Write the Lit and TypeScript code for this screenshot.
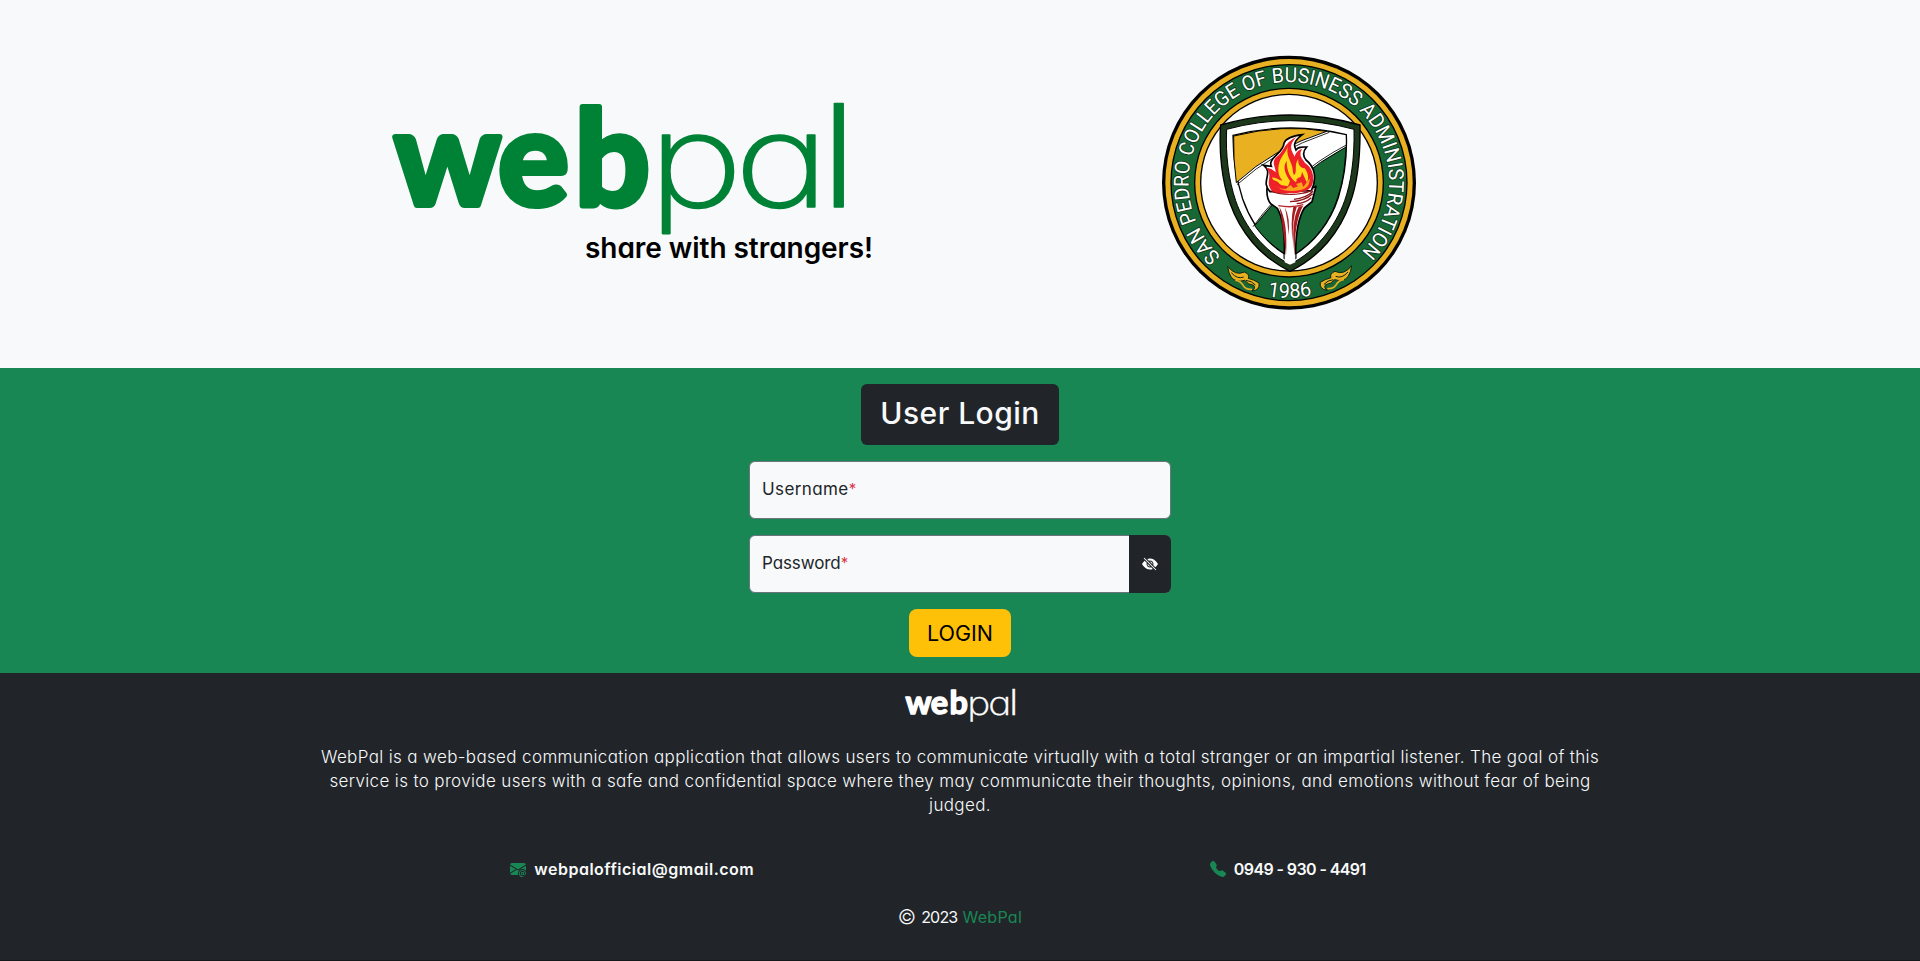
import { LitElement, html, svg, css } from "lit";
import { customElement, property } from "lit/decorators.js";

const FONT = css`"Inter", "Lato", sans-serif`;

@customElement("wp-wordmark")
export class WpWordmark extends LitElement {
  static styles = css`
    :host { display: block; }
    svg { display: block; width: 100%; height: 100%; overflow: visible; }
    .web { font: 700 133px "Lato", sans-serif; stroke-width: 6px; stroke-linejoin: round; }
    .pa { font: 200 131px "Inter", sans-serif; font-feature-settings: "cv11"; }
    .l { font: 300 143px "Lato", sans-serif; }
  `;
  @property() color = "#008236";
  render() {
    return html`<svg viewBox="12 12 452 134" preserveAspectRatio="none" fill=${this.color} stroke=${this.color}>
      <text class="web" x="14 118 194.5" y="115">web</text>
      <g transform="scale(1.22 1)" stroke-width="1.6" stroke-linejoin="round">
        <text y="117"><tspan class="pa" x="219.8 290.5">pa</tspan><tspan class="l" x="360.3">l</tspan></text>
      </g>
    </svg>`;
  }
}

const scroll = svg`
  <path d="M233 664Q256 694 283 681Q300 688 295 700Q312 704 327 714Q331 735 306 738Q318 730 311 721Q294 719 284 706Q258 714 244 697Q235 684 233 664Z" fill="#e9b021" stroke="#0d2413" stroke-width="3" stroke-linejoin="round"/>
  <path d="M244 683Q262 704 281 696M288 706Q306 708 316 720" fill="none" stroke="#0d2413" stroke-width="3"/>
  <path d="M258 706Q272 708 280 722Q288 734 304 733" fill="none" stroke="#e9b021" stroke-width="5" stroke-linecap="round"/>`;

@customElement("wp-seal")
export class WpSeal extends LitElement {
  static styles = css`
    :host { display: block; width: 280px; height: 275px; }
    svg { display: block; width: 100%; height: 100%; }
    .ring { font: 400 62px "Roboto", sans-serif; fill: #fff; stroke: #10331c; stroke-width: 5px; paint-order: stroke; }
  `;
  render() {
    return html`<svg viewBox="0 0 840 825">
      <defs>
        <path id="top" d="M213 634A301 301 0 1 1 622 632" />
        <path id="bottom" d="M337 750A345 345 0 0 0 507 746" />
      </defs>
      <circle cx="417" cy="413" r="381" fill="#000" />
      <circle cx="417" cy="413" r="371" fill="#e9b021" />
      <circle cx="417" cy="413" r="356" fill="#000" />
      <circle cx="417" cy="413" r="352" fill="#176834" />
      <circle cx="417" cy="413" r="285" fill="#000" />
      <circle cx="417" cy="413" r="281" fill="#e9b021" />
      <circle cx="417" cy="413" r="267" fill="#000" />
      <circle cx="417" cy="413" r="263" fill="#fff" />

      <text class="ring"><textPath href="#top" textLength="1425" lengthAdjust="spacingAndGlyphs">SAN PEDRO COLLEGE OF BUSINESS ADMINISTRATION</textPath></text>
      <text class="ring"><textPath href="#bottom" startOffset="16" textLength="134" lengthAdjust="spacingAndGlyphs">1986</textPath></text>

      <path d="M212 240Q420 180 630 240C632 350 620 420 600 475C570 560 510 635 420 679C330 635 270 560 240 475C216 410 206 320 212 240Z" fill="#1d391c" stroke="#000" stroke-width="4" />
      <path d="M230 253Q420 201 612 253C614 345 602 415 584 467C556 545 500 617 420 658C340 617 284 545 257 467C236 405 226 330 230 253Z" fill="#fff" stroke="#000" stroke-width="3" />
      <path d="M249 271Q420 228 589 269C592 345 581 405 565 458C542 530 492 598 420 637C348 598 302 530 278 462C258 400 249 340 249 271Z" fill="#fff" stroke="#000" stroke-width="4" />
      <path d="M251 273Q400 236 530 259Q370 310 259 413Q249 340 251 273Z" fill="#e9b021" stroke="#000" stroke-width="3" />
      <path d="M588 306C584 370 580 405 563 457C541 528 492 596 420 635C375 610 340 578 314 542Q430 390 588 306Z" fill="#176834" stroke="#000" stroke-width="3" />
      <path d="M538 262Q368 320 261 419M589 300Q425 385 309 545" fill="none" stroke="#000" stroke-width="2.5" />

      <path d="M364 432L351 430Q349 460 362 476L382 490Q405 530 403 620L403 640L437 640L437 620Q438 530 463 489L486 470L498 424L482 432Z" fill="#fff" stroke="#000" stroke-width="5" stroke-linejoin="round" />
      <path d="M404 628H436V652L420 659L404 652Z" fill="#fff" />
      <path d="M360 440C330 410 372 385 341 361L364 364C352 340 400 325 402 295C408 278 430 272 457 269C426 292 433 304 438 315C446 304 456 306 470 306C456 322 460 335 468 345C494 365 502 400 484 437Z" fill="#fff" stroke="#000" stroke-width="5" />
      <path d="M368 440C348 420 360 405 358 388C356 378 354 374 349 369C363 369 370 376 377 382C376 362 364 356 377 338C405 318 397 298 440 275C411 304 427 320 434 335C437 324 441 317 457 311C443 332 459 343 465 354C485 366 492 388 489 410C486 430 473 442 424 445C400 446 380 445 368 440Z" fill="#ee2028" />
      <path d="M366 398C380 396 390 410 397 406C382 390 382 365 391 344C400 327 411 318 414 300C407 330 421 345 425 360C430 373 427 385 433 390C443 380 431 360 445 342C442 361 457 372 463 369C476 383 477 405 470 412L456 380C454 405 441 396 438 412C421 400 410 378 410 347C395 368 410 393 420 408L414 424L397 421C387 420 390 410 370 405Z" fill="#ffd91a" />
      <path d="M371 412Q383 432 407 432L422 420L430 429L444 424L438 417L455 412L460 426L479 400C480 430 460 438 424 438Q385 438 371 412Z" fill="#f9a51b" />
      <path d="M376 418Q388 430 405 428M440 405Q446 396 458 398" fill="none" stroke="#ee2028" stroke-width="4" />
      <path d="M357 436Q425 460 492 432Q480 448 424 450Q375 450 357 436Z" fill="#8d1418" />
      <path d="M420 470Q465 468 488 446M432 463Q468 460 489 439M440 476Q466 474 484 458" fill="none" stroke="#8d1418" stroke-width="4" />
      <path d="M385 482Q425 490 460 479" fill="none" stroke="#b9262b" stroke-width="4" />
      <path d="M388 485Q414 530 408 632Q397 530 388 485ZM404 486Q422 520 415 570Q413 520 404 486ZM459 483Q433 530 434 632Q421 530 447 484L441 484Q427 520 428 590Q421 530 430 486Z" fill="#a81c21" />

      ${scroll}
      <g transform="translate(838 -2) scale(-1 1)">${scroll}</g>
    </svg>`;
  }
}

const eyeSlash = svg`<path d="m10.79 12.912-1.614-1.615a3.5 3.5 0 0 1-4.474-4.474l-2.06-2.06C.938 6.278 0 8 0 8s3 5.5 8 5.5a7 7 0 0 0 2.79-.588M5.21 3.088A7 7 0 0 1 8 2.5c5 0 8 5.5 8 5.5s-.939 1.721-2.641 3.238l-2.062-2.062a3.5 3.5 0 0 0-4.474-4.474z"/><path d="M5.525 7.646a2.5 2.5 0 0 0 2.829 2.829zm4.95.708-2.829-2.829a2.5 2.5 0 0 1 2.829 2.829zm3.171 6-12-12 .708-.708 12 12z"/>`;
const envelopeAt = svg`<path d="M2 2A2 2 0 0 0 .05 3.555L8 8.414l7.95-4.859A2 2 0 0 0 14 2zm-2 9.8V4.698l5.803 3.546zm6.761-2.97-6.57 4.026A2 2 0 0 0 2 14h6.256A4.5 4.5 0 0 1 8 12.5a4.49 4.49 0 0 1 1.606-3.446l-.367-.225L8 9.586zM16 9.671V4.697l-5.803 3.546.338.208A4.5 4.5 0 0 1 12.5 8c1.414 0 2.675.652 3.5 1.671"/><path d="M15.834 12.244c0 1.168-.577 2.025-1.587 2.025-.503 0-1.002-.228-1.12-.648h-.043c-.118.416-.543.643-1.015.643-.77 0-1.259-.542-1.259-1.434v-.529c0-.844.481-1.4 1.26-1.4.585 0 .87.333.953.63h.03v-.568h.905v2.19c0 .272.18.42.411.42.315 0 .639-.415.639-1.39v-.118c0-1.277-.95-2.326-2.484-2.326h-.04c-1.582 0-2.64 1.067-2.64 2.724v.157c0 1.867 1.237 2.654 2.57 2.654h.045c.507 0 .935-.07 1.18-.18v.731c-.219.1-.643.175-1.237.175h-.044C10.438 16 9 14.82 9 12.646v-.214C9 10.36 10.421 9 12.485 9h.035c2.12 0 3.314 1.43 3.314 3.034zm-4.04.21v.227c0 .586.227.8.581.8.31 0 .564-.17.564-.743v-.367c0-.516-.275-.708-.572-.708-.346 0-.573.245-.573.791"/>`;
const telephone = svg`<path d="M1.885.511a1.745 1.745 0 0 1 2.61.163L6.29 2.98c.329.423.445.974.315 1.494l-.547 2.19a.68.68 0 0 0 .178.643l2.457 2.457a.68.68 0 0 0 .644.178l2.189-.547a1.75 1.75 0 0 1 1.494.315l2.306 1.794c.829.645.905 1.87.163 2.611l-1.034 1.034c-.74.74-1.846 1.065-2.877.702a18.6 18.6 0 0 1-7.01-4.42 18.6 18.6 0 0 1-4.42-7.009c-.362-1.03-.037-2.137.703-2.877z"/>`;
const icon = (p: unknown) => html`<svg class="icon" viewBox="0 0 16 16" fill="currentColor">${p}</svg>`;

@customElement("app-root")
export class AppRoot extends LitElement {
  static styles = css`
    :host { display: block; font: 400 16px/24px ${FONT}; font-feature-settings: "cv11"; color: #212529; }
    * { box-sizing: border-box; }
    .page { height: 961px; display: flex; flex-direction: column; background: #212529; }
    header { height: 368px; background: #f8f9fb; display: flex; padding: 45px 0 0 392px; }
    .brand { width: 480px; padding-top: 57px; flex: none; }
    .brand wp-wordmark { width: 452px; height: 134px; }
    .tag { margin: -5px 0 0 193px; font-weight: 600; font-size: 28px; line-height: 34px; letter-spacing: -0.05px; color: #000; white-space: nowrap; }
    wp-seal { margin-left: 278px; flex: none; }
    main { height: 305px; background: #198754; display: flex; flex-direction: column; align-items: center; padding-top: 16px; }
    h1 { margin: 0 0 16px; width: 198px; height: 61px; border-radius: 6px; background: #212529; color: #f8f9fa; font-weight: 500; font-size: 30px; line-height: 58px; letter-spacing: 0.45px; text-align: center; white-space: nowrap; }
    .field { width: 422px; height: 58px; margin-bottom: 16px; border: 1px solid #6c757d; border-radius: 6px; background: #f8f9fb; display: flex; align-items: center; padding-left: 12px; font-size: 17px; letter-spacing: -0.1px; }
    .field.user { letter-spacing: 0.4px; }
    .field span, .field b { padding-bottom: 2px; }
    .field b { color: #dc3545; font-weight: 400; font-size: 15px; }
    .eye { margin: -1px -1px -1px auto; width: 42px; height: 58px; border-radius: 0 6px 6px 0; background: #212529; color: #fff; display: grid; place-items: center; padding-bottom: 1px; }
    .icon { width: 16px; height: 16px; flex: none; }
    button { width: 102px; height: 48px; border: 0; border-radius: 8px; background: #ffc107; color: #000; font: 400 21.5px/46px ${FONT}; padding: 0; }
    footer { flex: 1; color: #f8f9fa; display: flex; flex-direction: column; align-items: center; padding-top: 16px; border-bottom: 1px solid #15181b; }
    footer wp-wordmark { width: 110px; height: 33px; }
    p { margin: 23px 0 0; text-align: center; white-space: nowrap; font-weight: 300; font-size: 17px; letter-spacing: 0.36px; }
    .contacts { display: flex; width: 1311px; margin-top: 40px; font-weight: 600; }
    .contacts div { flex: 1; display: flex; align-items: center; justify-content: center; gap: 8px; }
    .contacts .icon { color: #198754; }
    .mail { letter-spacing: 0.52px; }
    .phone { letter-spacing: -0.6px; }
    .copy { margin-top: 24px; display: flex; gap: 5px; align-items: center; }
    .mark { font-size: 20px; font-weight: 300; }
    .year { letter-spacing: -0.8px; }
    .copy a { color: #198754; letter-spacing: 0.3px; }
  `;
  render() {
    return html`<div class="page">
      <header>
        <div class="brand"><wp-wordmark></wp-wordmark><div class="tag">share with strangers!</div></div>
        <wp-seal></wp-seal>
      </header>
      <main>
        <h1>User Login</h1>
        <div class="field user"><span>Username</span><b>*</b></div>
        <div class="field"><span>Password</span><b>*</b><div class="eye">${icon(eyeSlash)}</div></div>
        <button>LOGIN</button>
      </main>
      <footer>
        <wp-wordmark color="#fff"></wp-wordmark>
        <p>WebPal is a web-based communication application that allows users to communicate virtually with a total stranger or an impartial listener. The goal of this<br>service is to provide users with a safe and confidential space where they may communicate their thoughts, opinions, and emotions without fear of being<br>judged.</p>
        <div class="contacts"><div>${icon(envelopeAt)}<span class="mail">webpalofficial@gmail.com</span></div><div>${icon(telephone)}<span class="phone">0949 - 930 - 4491</span></div></div>
        <div class="copy"><span class="mark">©</span><span class="year">2023</span><a>WebPal</a></div>
      </footer>
    </div>`;
  }
}
